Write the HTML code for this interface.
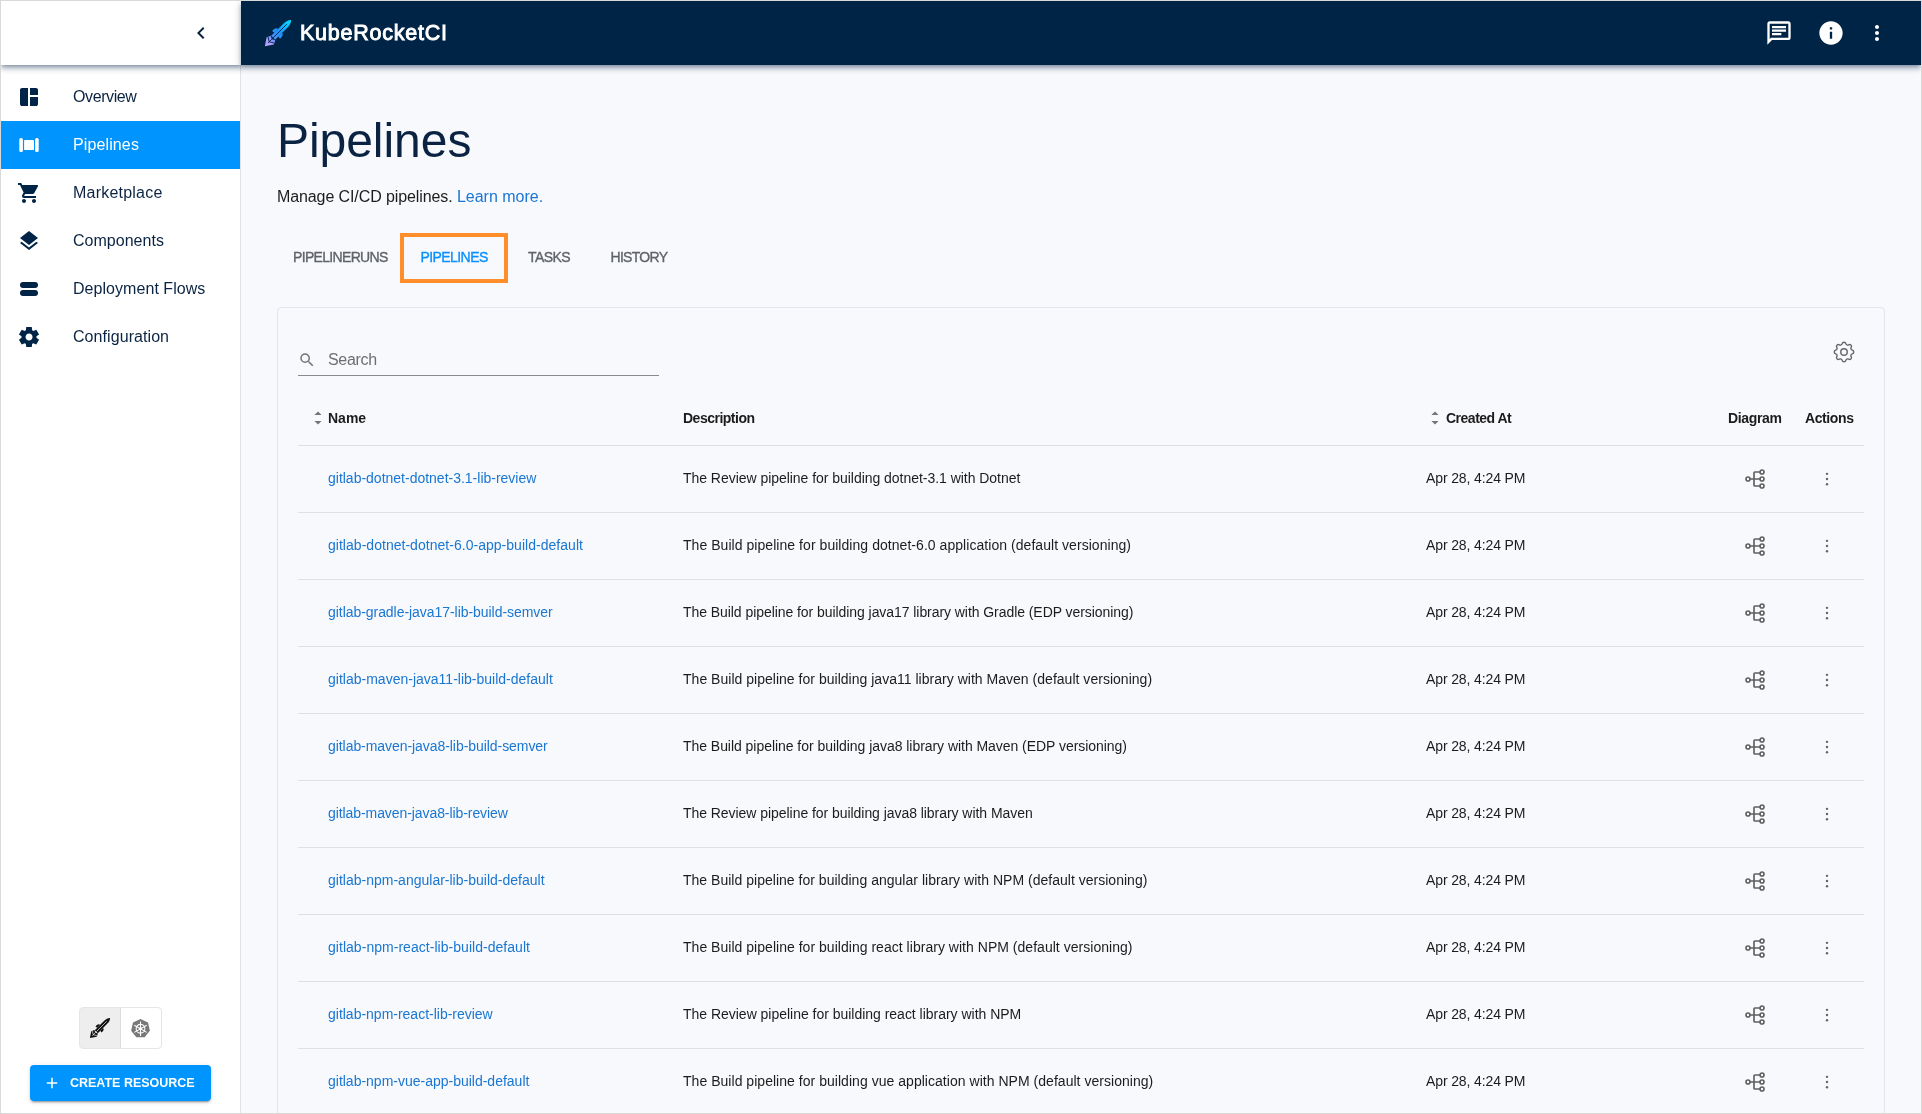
<!DOCTYPE html>
<html lang="en">
<head>
<meta charset="utf-8">
<title>KubeRocketCI - Pipelines</title>
<style>
*{box-sizing:border-box;margin:0;padding:0}
html,body{width:1922px;height:1114px;overflow:hidden}
body{font-family:"Liberation Sans",sans-serif;background:#d9d9d9;position:relative;color:#1c1c1c}
#app{will-change:transform;position:absolute;left:1px;top:1px;width:1920px;height:1112px;background:#f8f9fd;overflow:hidden}
#app *{position:absolute}
svg{display:block}
/* sidebar */
#side{left:0;top:0;width:240px;height:1112px;background:#fff;border-right:1px solid #e1e2e6}
#sidetop{left:0;top:0;width:240px;height:64px;background:#fff;box-shadow:0 2px 4px -1px rgba(0,36,70,.36),0 4px 5px 0 rgba(0,36,70,.2),0 1px 10px 0 rgba(0,36,70,.14)}
.it{left:0;width:239px;height:48px}
.it span{left:72px;top:0;line-height:48px;font-size:16px;color:#0b2343;white-space:nowrap}
.it svg{left:16px;top:12px;width:24px;height:24px;fill:#002446}
.it.on{background:#0094ff}
.it.on span{color:#fff}
.it.on svg{fill:#fff}
/* top bar */
#bar{left:240px;top:0;width:1680px;height:64px;background:#002446;box-shadow:0 2px 4px -1px rgba(0,36,70,.36),0 4px 5px 0 rgba(0,36,70,.2),0 1px 10px 0 rgba(0,36,70,.14)}
#brand{left:59px;top:0;line-height:64px;font-size:21.500px;color:#fff;white-space:nowrap;letter-spacing:.75px;-webkit-text-stroke:.9px #fff}
/* heading */
h1{left:276px;top:111px;font-size:48px;line-height:58px;font-weight:normal;color:#0b2343;white-space:nowrap;letter-spacing:-.05px}
#sub{left:276px;top:185px;font-size:16px;line-height:22px;color:#1c1c1c;white-space:nowrap;letter-spacing:-.1px}
#sub a{position:static;color:#1976d2;letter-spacing:0}
.tab{top:232px;height:49px;line-height:49px;font-size:14px;color:#5f6368;white-space:nowrap;letter-spacing:-.5px;-webkit-text-stroke:.35px currentColor}
#tbox{left:399px;top:232px;width:108px;height:50px;border:4px solid #ff8e2b}
/* card */
#card{left:276px;top:306px;width:1608px;height:900px;border:1px solid #e3e5ec;border-radius:4px;background:#f8f9fd}
#sline{left:297px;top:374px;width:361px;height:1px;background:#8a8a8a}
#stext{left:327px;top:348px;font-size:16px;line-height:22px;color:#6e6e6e;letter-spacing:-.3px}
.th{top:405px;line-height:24px;font-size:14px;font-weight:bold;color:#1c1c1c;white-space:nowrap}
#hline{left:297px;top:444px;width:1566px;height:1px;background:#e0e0e0}
.row{left:297px;width:1566px;height:67px;border-bottom:1px solid #e0e0e0}
.row .c{top:0;line-height:64px;font-size:14px;white-space:nowrap}
.nm{left:30px;color:#1976d2}
.ds{left:385px;color:#1c1c1c}
.dt{left:1128px;color:#1c1c1c;letter-spacing:-.12px}
.dg{left:1446px;top:21px;width:24px;height:24px}
.mv{left:1519px;top:23px;width:20px;height:20px}
.rk-ln{fill:none;stroke:var(--rln);stroke-width:.9}
.rk{--rin:rgba(0,36,70,.6);--rln:#002446}
.rkb{--rin:#ebebeb;--rln:#ebebeb}
/* bottom */
#tg{left:78px;top:1006px;width:83px;height:42px;border:1px solid #e6e6e6;border-radius:4px;background:#fff;overflow:hidden}
#tg1{left:-1px;top:-1px;width:42px;height:42px;background:#eee;border:1px solid #dcdcdc;border-radius:4px 0 0 4px}
#btn{left:29px;top:1064px;width:181px;height:36px;border-radius:4px;background:#0094ff;box-shadow:0 3px 1px -2px rgba(0,0,0,.2),0 2px 2px 0 rgba(0,0,0,.14),0 1px 5px 0 rgba(0,0,0,.12)}
#btn span{left:40px;top:0;line-height:36px;font-size:13.500px;font-weight:bold;color:#fff;white-space:nowrap;transform:scaleX(.925);transform-origin:0 50%}
</style>
</head>
<body>
<svg width="0" height="0" style="position:absolute">
<defs>
<linearGradient id="lg" gradientUnits="userSpaceOnUse" x1="0" y1="-18.500" x2="0" y2="18.500"><stop offset="0" stop-color="#00e1ff"/><stop offset=".45" stop-color="#1c95ff"/><stop offset=".68" stop-color="#4f8cf5"/><stop offset=".8" stop-color="#a99bff"/><stop offset="1" stop-color="#b9a6ff"/></linearGradient>
<g id="dgm" fill="none" stroke="#606060" stroke-width="1.650" stroke-linecap="round" stroke-linejoin="round">
<circle cx="4" cy="12" r="2"/><circle cx="18" cy="5" r="2"/><circle cx="18" cy="12" r="2"/><circle cx="18" cy="19" r="2"/>
<path d="M6 12H16M16 5H10.800Q10 5 10 5.800V18.200Q10 19 10.800 19H16"/>
</g>
<g id="mvt" fill="#666"><circle cx="12" cy="5.8" r="1.45"/><circle cx="12" cy="12" r="1.45"/><circle cx="12" cy="18.2" r="1.45"/></g>
<g id="rocket" transform="translate(13 13) rotate(45)">
<path d="M0-18.500C1.900-16.700 2.800-14 2.800-10V6.800H-2.800V-10C-2.800-14-1.900-16.700 0-18.500Z"/>
<path d="M2.800-3C5-2.800 5.800-.7 5.600 2.700L2.800 2.300ZM-2.800-3C-5-2.800-5.800-.7-5.600 2.700L-2.800 2.300Z"/>
<path d="M-3.200 7L0 8.700L3.200 7L5.100 11L0 18.600L-5.100 11Z"/>
<path class="rk-ln" d="M0-12.400V6.800"/>
<path class="rk-ln" d="M0 8.700V14M-4.200 9.900L0 12.400L4.200 9.900"/>
</g>
</defs>
</svg>
<div id="app">
<div id="side"></div>
<!-- sidebar items -->
<div class="it" style="top:72px"><svg viewBox="0 0 24 24"><path d="M5 21q-.825 0-1.412-.587T3 19V5q0-.825.588-1.412T5 3h6v18zm8 0v-9h8v7q0 .825-.587 1.413T19 21zm0-11V3h6q.825 0 1.413.588T21 5v5z"/></svg><span style="letter-spacing:-.4px">Overview</span></div>
<div class="it on" style="top:120px"><svg viewBox="0 0 24 24"><rect x="2.300" y="5" width="3.600" height="14.100" rx="1.600"/><rect x="7.100" y="7.100" width="9.900" height="9.900" rx=".4"/><rect x="18.100" y="5" width="3.600" height="14.100" rx="1.600"/></svg><span style="letter-spacing:.12px">Pipelines</span></div>
<div class="it" style="top:168px"><svg viewBox="0 0 24 24"><path d="M7 18c-1.100 0-1.990.9-1.990 2S5.900 22 7 22s2-.9 2-2-.9-2-2-2zM1 2v2h2l3.600 7.590-1.350 2.450c-.16.280-.25.610-.25.960 0 1.100.9 2 2 2h12v-2H7.420c-.14 0-.25-.11-.25-.25l.03-.12.900-1.630h7.450c.75 0 1.410-.41 1.750-1.030l3.580-6.490A1.003 1.003 0 0 0 20 4H5.210l-.94-2H1zm16 16c-1.100 0-1.990.9-1.990 2s.89 2 1.990 2 2-.9 2-2-.9-2-2-2z"/></svg><span style="letter-spacing:.22px">Marketplace</span></div>
<div class="it" style="top:216px"><svg viewBox="0 0 24 24"><path d="M11.990 18.540l-7.370-5.730L3 14.070l9 7 9-7-1.630-1.270-7.380 5.740zM12 16l7.360-5.730L21 9l-9-7-9 7 1.630 1.270L12 16z"/></svg><span style="letter-spacing:.02px">Components</span></div>
<div class="it" style="top:264px"><svg viewBox="0 0 24 24"><rect x="3" y="5" width="18" height="6" rx="3"/><rect x="3" y="13" width="18" height="6" rx="3"/></svg><span style="letter-spacing:.05px">Deployment Flows</span></div>
<div class="it" style="top:312px"><svg viewBox="0 0 24 24"><path d="m9.250 22l-.4-3.200q-.325-.125-.612-.3t-.563-.375L4.700 19.375l-2.750-4.750l2.575-1.950Q4.500 12.500 4.500 12.338v-.675q0-.163.025-.338L1.950 9.375l2.750-4.750l2.975 1.250q.275-.2.575-.375t.6-.3l.4-3.200h5.500l.4 3.200q.325.125.613.300t.562.375l2.975-1.250l2.750 4.750l-2.575 1.950q.025.175.025.338v.674q0 .163-.05.338l2.575 1.950l-2.750 4.750l-2.950-1.250q-.275.2-.575.375t-.6.300l-.4 3.200zm2.800-6.500q1.450 0 2.475-1.025T15.550 12t-1.025-2.475T12.050 8.500q-1.475 0-2.488 1.025T8.550 12t1.013 2.475T12.050 15.500"/></svg><span style="letter-spacing:.07px">Configuration</span></div>
<div id="sidetop"><svg style="left:188px;top:20px;width:24px;height:24px" viewBox="0 0 24 24"><path fill="#0b2343" d="M15.410 7.410L14 6l-6 6 6 6 1.410-1.410L10.830 12z"/></svg></div>
<!-- top bar -->
<div id="bar">
<svg class="rk" style="left:24px;top:19px;width:26px;height:26px;overflow:visible" viewBox="0 0 26 26" fill="url(#lg)"><use href="#rocket"/></svg>
<div id="brand">KubeRocketCI</div>
<svg style="left:1524px;top:18px;width:28px;height:28px" viewBox="0 0 24 24"><path fill="#fff" d="M4 4h16v12H5.170L4 17.170V4m0-2c-1.100 0-1.990.9-1.990 2L2 22l4-4h14c1.100 0 2-.9 2-2V4c0-1.100-.9-2-2-2H4zm2 10h8v2H6v-2zm0-3h12v2H6V9zm0-3h12v2H6V6z"/></svg>
<svg style="left:1576px;top:18px;width:28px;height:28px" viewBox="0 0 24 24"><path fill="#fff" d="M12 2C6.480 2 2 6.480 2 12s4.480 10 10 10 10-4.480 10-10S17.520 2 12 2zm1 15h-2v-6h2v6zm0-8h-2V7h2v2z"/></svg>
<svg style="left:1624px;top:20px;width:24px;height:24px" viewBox="0 0 24 24"><path fill="#fff" d="M12 8c1.100 0 2-.9 2-2s-.9-2-2-2-2 .9-2 2 .9 2 2 2zm0 2c-1.100 0-2 .9-2 2s.9 2 2 2 2-.9 2-2-.9-2-2-2zm0 6c-1.100 0-2 .9-2 2s.9 2 2 2 2-.9 2-2-.9-2-2-2z"/></svg>
</div>
<!-- heading -->
<h1>Pipelines</h1>
<div id="sub">Manage CI/CD pipelines. <a>Learn more.</a></div>
<div class="tab" style="left:292px;letter-spacing:-.67px">PIPELINERUNS</div>
<div class="tab" style="left:419.500px;letter-spacing:-.58px;color:#0a8fff">PIPELINES</div>
<div class="tab" style="left:527px;letter-spacing:-.55px">TASKS</div>
<div class="tab" style="left:609.500px;letter-spacing:-.7px">HISTORY</div>
<div id="tbox"></div>
<!-- card -->
<div id="card"></div>
<svg style="left:297px;top:350px;width:18px;height:18px" viewBox="0 0 24 24"><path fill="#757575" d="M15.500 14h-.79l-.28-.27A6.471 6.471 0 0 0 16 9.500 6.500 6.500 0 1 0 9.500 16c1.610 0 3.090-.59 4.230-1.570l.27.280v.79l5 4.990L20.490 19l-4.990-5zm-6 0C7.010 14 5 11.990 5 9.500S7.010 5 9.500 5 14 7.010 14 9.500 11.990 14 9.500 14z"/></svg>
<div id="stext">Search</div>
<div id="sline"></div>
<svg style="left:1830px;top:338px;width:26px;height:26px" viewBox="0 0 24 24" fill="none" stroke="#666" stroke-width="1.300" stroke-linecap="round" stroke-linejoin="round"><path d="M10.325 4.317c.426-1.756 2.924-1.756 3.350 0a1.724 1.724 0 0 0 2.573 1.066c1.543-.94 3.310.826 2.370 2.370a1.724 1.724 0 0 0 1.065 2.572c1.756.426 1.756 2.924 0 3.350a1.724 1.724 0 0 0-1.066 2.573c.94 1.543-.826 3.310-2.370 2.370a1.724 1.724 0 0 0-2.572 1.065c-.426 1.756-2.924 1.756-3.350 0a1.724 1.724 0 0 0-2.573-1.066c-1.543.94-3.310-.826-2.370-2.370a1.724 1.724 0 0 0-1.065-2.572c-1.756-.426-1.756-2.924 0-3.350a1.724 1.724 0 0 0 1.066-2.573c-.94-1.543.826-3.310 2.370-2.370c1 .608 2.296.070 2.572-1.065z"/><circle cx="12" cy="12" r="3"/></svg>
<!-- table header -->
<svg style="left:310px;top:408px;width:14px;height:18px" viewBox="0 0 14 18"><path fill="#757575" d="M7 2.600L10.600 6H3.400zM7 15.600L3.400 12.100h7.200z"/></svg>
<div class="th" style="left:327px">Name</div>
<div class="th" style="left:682px;letter-spacing:-.5px">Description</div>
<svg style="left:1427px;top:408px;width:14px;height:18px" viewBox="0 0 14 18"><path fill="#757575" d="M7 2.600L10.600 6H3.400zM7 15.600L3.400 12.100h7.200z"/></svg>
<div class="th" style="left:1445px;letter-spacing:-.5px">Created At</div>
<div class="th" style="left:1727px;letter-spacing:-.35px">Diagram</div>
<div class="th" style="left:1804px;letter-spacing:-.4px">Actions</div>
<div id="hline"></div>

<div class="row" style="top:445px">
<a class="c nm" style="letter-spacing:-0.006px">gitlab-dotnet-dotnet-3.1-lib-review</a><span class="c ds" style="letter-spacing:-0.037px">The Review pipeline for building dotnet-3.1 with Dotnet</span><span class="c dt">Apr 28, 4:24 PM</span>
<svg class="dg" viewBox="0 0 24 24"><use href="#dgm"/></svg>
<svg class="mv" viewBox="0 0 24 24"><use href="#mvt"/></svg>
</div>
<div class="row" style="top:512px">
<a class="c nm" style="letter-spacing:0.029px">gitlab-dotnet-dotnet-6.0-app-build-default</a><span class="c ds" style="letter-spacing:0.049px">The Build pipeline for building dotnet-6.0 application (default versioning)</span><span class="c dt">Apr 28, 4:24 PM</span>
<svg class="dg" viewBox="0 0 24 24"><use href="#dgm"/></svg>
<svg class="mv" viewBox="0 0 24 24"><use href="#mvt"/></svg>
</div>
<div class="row" style="top:579px">
<a class="c nm" style="letter-spacing:-0.050px">gitlab-gradle-java17-lib-build-semver</a><span class="c ds" style="letter-spacing:-0.062px">The Build pipeline for building java17 library with Gradle (EDP versioning)</span><span class="c dt">Apr 28, 4:24 PM</span>
<svg class="dg" viewBox="0 0 24 24"><use href="#dgm"/></svg>
<svg class="mv" viewBox="0 0 24 24"><use href="#mvt"/></svg>
</div>
<div class="row" style="top:646px">
<a class="c nm" style="letter-spacing:0.006px">gitlab-maven-java11-lib-build-default</a><span class="c ds" style="letter-spacing:0.021px">The Build pipeline for building java11 library with Maven (default versioning)</span><span class="c dt">Apr 28, 4:24 PM</span>
<svg class="dg" viewBox="0 0 24 24"><use href="#dgm"/></svg>
<svg class="mv" viewBox="0 0 24 24"><use href="#mvt"/></svg>
</div>
<div class="row" style="top:713px">
<a class="c nm" style="letter-spacing:-0.059px">gitlab-maven-java8-lib-build-semver</a><span class="c ds" style="letter-spacing:-0.044px">The Build pipeline for building java8 library with Maven (EDP versioning)</span><span class="c dt">Apr 28, 4:24 PM</span>
<svg class="dg" viewBox="0 0 24 24"><use href="#dgm"/></svg>
<svg class="mv" viewBox="0 0 24 24"><use href="#mvt"/></svg>
</div>
<div class="row" style="top:780px">
<a class="c nm" style="letter-spacing:-0.079px">gitlab-maven-java8-lib-review</a><span class="c ds" style="letter-spacing:-0.050px">The Review pipeline for building java8 library with Maven</span><span class="c dt">Apr 28, 4:24 PM</span>
<svg class="dg" viewBox="0 0 24 24"><use href="#dgm"/></svg>
<svg class="mv" viewBox="0 0 24 24"><use href="#mvt"/></svg>
</div>
<div class="row" style="top:847px">
<a class="c nm" style="letter-spacing:0.006px">gitlab-npm-angular-lib-build-default</a><span class="c ds" style="letter-spacing:0.018px">The Build pipeline for building angular library with NPM (default versioning)</span><span class="c dt">Apr 28, 4:24 PM</span>
<svg class="dg" viewBox="0 0 24 24"><use href="#dgm"/></svg>
<svg class="mv" viewBox="0 0 24 24"><use href="#mvt"/></svg>
</div>
<div class="row" style="top:914px">
<a class="c nm" style="letter-spacing:0.036px">gitlab-npm-react-lib-build-default</a><span class="c ds" style="letter-spacing:0.027px">The Build pipeline for building react library with NPM (default versioning)</span><span class="c dt">Apr 28, 4:24 PM</span>
<svg class="dg" viewBox="0 0 24 24"><use href="#dgm"/></svg>
<svg class="mv" viewBox="0 0 24 24"><use href="#mvt"/></svg>
</div>
<div class="row" style="top:981px">
<a class="c nm" style="letter-spacing:-0.008px">gitlab-npm-react-lib-review</a><span class="c ds" style="letter-spacing:-0.019px">The Review pipeline for building react library with NPM</span><span class="c dt">Apr 28, 4:24 PM</span>
<svg class="dg" viewBox="0 0 24 24"><use href="#dgm"/></svg>
<svg class="mv" viewBox="0 0 24 24"><use href="#mvt"/></svg>
</div>
<div class="row" style="top:1048px">
<a class="c nm" style="letter-spacing:-0.006px">gitlab-npm-vue-app-build-default</a><span class="c ds" style="letter-spacing:0.034px">The Build pipeline for building vue application with NPM (default versioning)</span><span class="c dt">Apr 28, 4:24 PM</span>
<svg class="dg" viewBox="0 0 24 24"><use href="#dgm"/></svg>
<svg class="mv" viewBox="0 0 24 24"><use href="#mvt"/></svg>
</div>
<!-- bottom of sidebar -->
<div id="tg"><div id="tg1"></div>
<svg class="rkb" style="left:10px;top:10px;width:20px;height:20px;overflow:visible" viewBox="0 0 26 26" fill="#111"><use href="#rocket"/></svg>
<svg style="left:50px;top:9.500px;width:21px;height:21px" viewBox="0 0 24 24"><path fill="#787878" d="M12 1l8.600 4.140 2.120 9.300-5.950 7.460H7.230L1.280 14.440 3.400 5.140z"/><g fill="none" stroke="#fff" stroke-width="1.200"><circle cx="12" cy="12.300" r="5"/><path d="M12 4v16.600M4.900 8.200l14.200 8.200M19.100 8.200L4.900 16.400"/></g><circle cx="12" cy="12.300" r="1.700" fill="#fff"/></svg>
</div>
<div id="btn"><svg style="left:13px;top:9px;width:18px;height:18px" viewBox="0 0 24 24"><path fill="#fff" d="M19 13h-6v6h-2v-6H5v-2h6V5h2v6h6v2z"/></svg><span>CREATE RESOURCE</span></div>
</div>
</body>
</html>
